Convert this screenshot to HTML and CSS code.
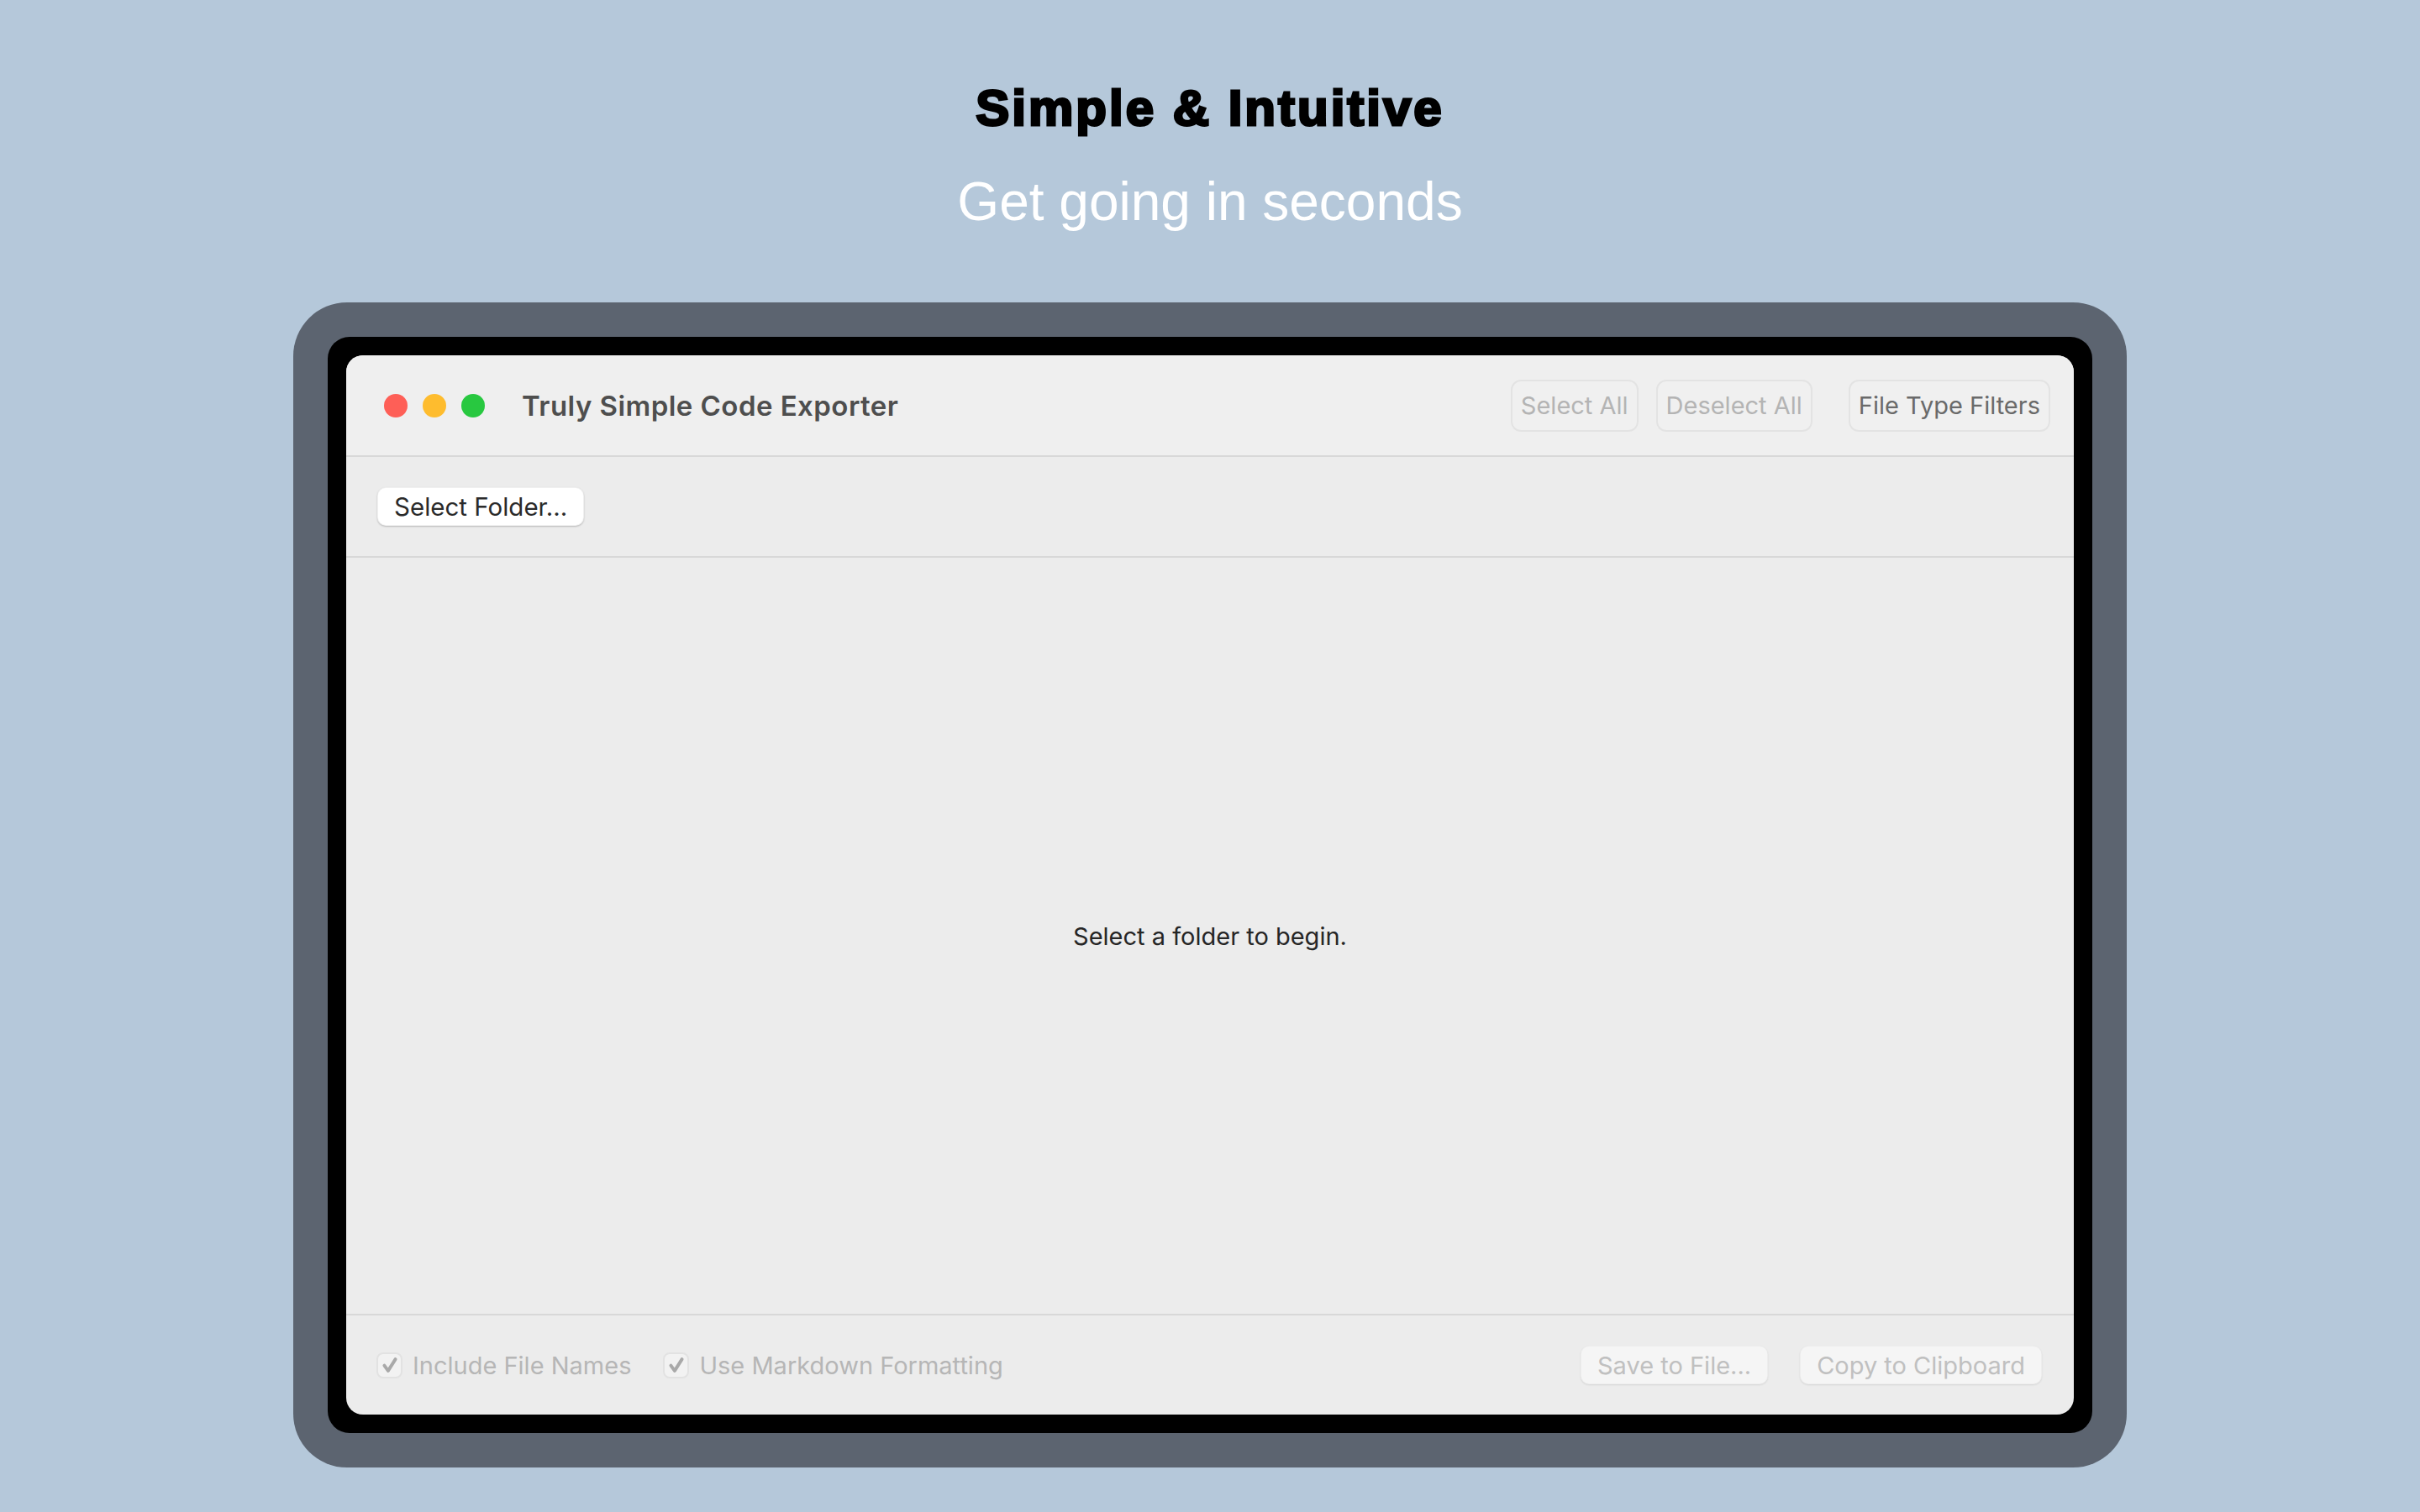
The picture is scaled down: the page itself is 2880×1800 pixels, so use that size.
FILE: index.html
```html
<!DOCTYPE html>
<html lang="en">
<head>
<meta charset="utf-8">
<title>Truly Simple Code Exporter</title>
<link rel="stylesheet" href="styles.css">
</head>
<body>
<header class="hero">
  <h1 class="hero-title">Simple &amp; Intuitive</h1>
  <p class="hero-sub">Get going in seconds</p>
</header>
<div class="device">
  <div class="bezel">
    <div class="window">
      <div class="titlebar">
        <div class="lights">
          <span class="light red"></span>
          <span class="light yellow"></span>
          <span class="light green"></span>
        </div>
        <div class="win-title">Truly Simple Code Exporter</div>
        <div class="title-actions">
          <button class="tbtn disabled">Select All</button>
          <button class="tbtn disabled">Deselect All</button>
          <button class="tbtn filters">File Type Filters</button>
        </div>
      </div>
      <div class="toolbar">
        <button class="pbtn">Select Folder...</button>
      </div>
      <div class="content">
        <p class="empty">Select a folder to begin.</p>
      </div>
      <div class="footer">
        <label class="check"><span class="box"><svg viewBox="0 0 16 16" class="tick"><path d="M3.6 8.4 L6.6 12.6 L12.4 3.4" fill="none" stroke="currentColor" stroke-width="2.6" stroke-linecap="round" stroke-linejoin="round"/></svg></span>Include File Names</label>
        <label class="check"><span class="box"><svg viewBox="0 0 16 16" class="tick"><path d="M3.6 8.4 L6.6 12.6 L12.4 3.4" fill="none" stroke="currentColor" stroke-width="2.6" stroke-linecap="round" stroke-linejoin="round"/></svg></span>Use Markdown Formatting</label>
        <div class="footer-actions">
          <button class="fbtn">Save to File...</button>
          <button class="fbtn">Copy to Clipboard</button>
        </div>
      </div>
    </div>
  </div>
</div>
</body>
</html>
```

FILE: styles.css
```css
* { box-sizing: border-box; }

html, body {
  margin: 0;
  padding: 0;
}

body {
  width: 2880px;
  height: 1800px;
  background: #b5c8da;
  font-family: "Inter", "Noto Sans", sans-serif;
  overflow: hidden;
}

.hero {
  padding-top: 99px;
  text-align: center;
}

.hero-title {
  margin: 0;
  font-family: "Liberation Sans", Arial, sans-serif;
  font-weight: 700;
  font-size: 60px;
  line-height: 60px;
  letter-spacing: 3px;
  color: #000;
  -webkit-text-stroke: 3px #000;
}

.hero-sub {
  margin: 49px 0 0;
  font-family: "Liberation Sans", Arial, sans-serif;
  font-weight: 400;
  font-size: 64px;
  line-height: 64px;
  color: #ffffff;
}

.device {
  width: 2182px;
  height: 1387px;
  margin: 88px auto 0;
  padding: 41px;
  background: #5c6470;
  border-radius: 64px;
}

.bezel {
  height: 100%;
  padding: 22px;
  background: #000;
  border-radius: 26px;
}

.window {
  height: 100%;
  display: flex;
  flex-direction: column;
  background: #ececec;
  border-radius: 20px;
  overflow: hidden;
}

.titlebar {
  height: 121px;
  flex: none;
  display: flex;
  align-items: center;
  padding: 0 28px 0 45px;
  background: #efefef;
  border-bottom: 2px solid #d8d8d8;
}

.lights {
  display: flex;
  gap: 18px;
}

.light {
  width: 28px;
  height: 28px;
  border-radius: 50%;
}
.light.red { background: #fe5f57; }
.light.yellow { background: #febc2e; }
.light.green { background: #28c840; }

.win-title {
  margin-left: 44px;
  font-size: 33px;
  font-weight: 600;
  color: #4e4e4e;
  letter-spacing: 0.45px;
}

.title-actions {
  margin-left: auto;
  display: flex;
  align-items: center;
}

button {
  font-family: inherit;
  margin: 0;
}

.tbtn {
  height: 62px;
  padding: 0 10px;
  background: #f0f0f0;
  border: 2px solid #e3e3e3;
  border-radius: 12px;
  font-size: 29px;
  font-weight: 400;
  color: #b4b4b4;
}
.tbtn + .tbtn { margin-left: 21px; }
.tbtn.filters {
  margin-left: 43px;
  color: #6a6a6a;
}

.toolbar {
  height: 120px;
  flex: none;
  display: flex;
  align-items: center;
  padding-left: 37px;
  border-bottom: 2px solid #d8d8d8;
}

.pbtn {
  height: 46px;
  padding: 0 19px;
  background: #ffffff;
  border: 1px solid rgba(0,0,0,0.06);
  border-radius: 10px;
  box-shadow: 0 1px 2px rgba(0,0,0,0.22);
  font-size: 29.5px;
  color: #2a2a2a;
}

.content {
  flex: 1;
  display: flex;
  align-items: center;
  justify-content: center;
}

.empty {
  margin: 0;
  font-size: 29px;
  color: #262626;
}

.footer {
  height: 120px;
  flex: none;
  display: flex;
  align-items: center;
  padding: 0 38px 0 36px;
  border-top: 2px solid #d8d8d8;
}

.check {
  display: flex;
  align-items: center;
  font-size: 29px;
  color: #b6b6b6;
}
.check + .check { margin-left: 38px; }

.box {
  width: 31px;
  height: 31px;
  margin-right: 12px;
  border: 2px solid #e2e2e2;
  border-radius: 8px;
  background: #f2f2f2;
  display: flex;
  align-items: center;
  justify-content: center;
  color: #a9a9a9;
}

.tick {
  width: 24px;
  height: 24px;
}

.footer-actions {
  margin-left: auto;
  display: flex;
  gap: 38px;
}

.fbtn {
  height: 46px;
  padding: 0 19px;
  background: #f5f5f5;
  border: 1px solid rgba(0,0,0,0.03);
  border-radius: 10px;
  box-shadow: 0 1px 2px rgba(0,0,0,0.1);
  font-size: 29px;
  color: #c0c0c0;
}
```
